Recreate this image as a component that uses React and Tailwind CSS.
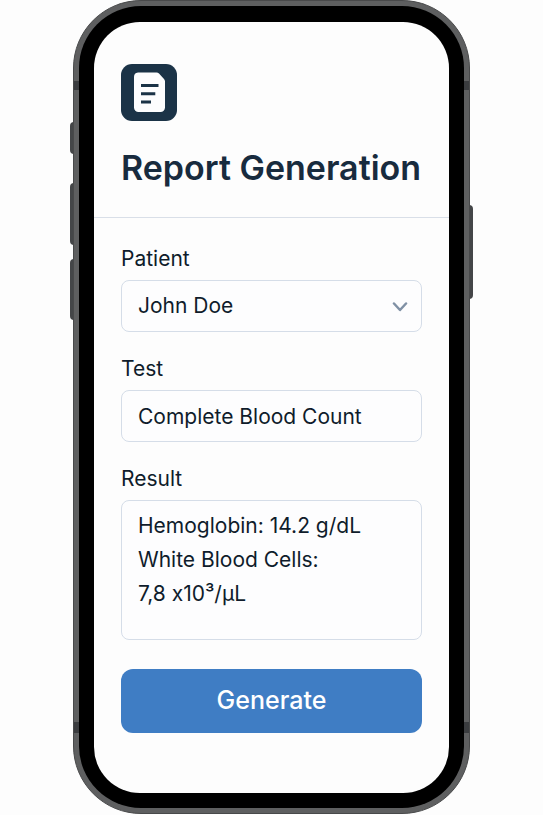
const fieldClass =
  "block w-full rounded-lg border border-[#d5dde8] bg-[#fdfdfe] px-4 font-normal text-[21px] text-[#0f1c2b] outline-none focus:border-[#3f7dc4]";

function ReportLogo() {
  return (
    <svg viewBox="0 0 56 57" className="block h-[57px] w-14" aria-hidden="true">
      <rect width="56" height="57" rx="11" fill="#1b3347" />
      <path
        d="M17 8.500h18.500q1.500 0 2.500 1l5 5.500q1 1 1 2.500V43.500a4.500 4.500 0 0 1-4.500 4.500H17.500a4.500 4.500 0 0 1-4.500-4.500V13a4.500 4.500 0 0 1 4-4.500z"
        fill="#fdfdfe"
      />
      <path d="M20 21.500h17.500M20 29.800h14.300M20 38h10" stroke="#1b3347" strokeWidth="3" />
    </svg>
  );
}

function Field({ id, label, children }) {
  return (
    <div className="flex flex-col gap-[7px]">
      <label htmlFor={id} className="text-[21px] leading-7 text-[#0f1c2b]">
        {label}
      </label>
      {children}
    </div>
  );
}

function PhoneFrame({ children }) {
  return (
    <div className="relative w-full max-w-[403px] px-[3px]">
      <span className="absolute top-[122px] left-0 h-8 w-1 rounded-l-sm bg-[#444648]" />
      <span className="absolute top-[183px] left-0 h-[62px] w-1 rounded-l-sm bg-[#444648]" />
      <span className="absolute top-[259px] left-0 h-[61px] w-1 rounded-l-sm bg-[#444648]" />
      <span className="absolute top-[205px] right-0 h-[94px] w-1 rounded-r-sm bg-[#444648]" />
      <div className="relative overflow-hidden rounded-[68px] border border-[#48494a] bg-[#5e5f60] p-[5px]">
        <span className="absolute inset-x-0 top-20 h-[9px] bg-[#3a3c3f]" />
        <span className="absolute inset-x-0 bottom-20 h-[11px] bg-[#3a3c3f]" />
        <div className="relative rounded-[62px] bg-black px-[15px] pt-4 pb-[15px]">
          <div className="overflow-hidden rounded-[46px] bg-[#fdfdfd]">{children}</div>
        </div>
      </div>
    </div>
  );
}

export default function App() {
  return (
    <div
      className="flex min-h-screen items-start justify-center bg-[#fdfdfd] font-['Inter',sans-serif] [font-feature-settings:'calt'_0]"
    >
      <PhoneFrame>
        <header className="border-b border-[#d9dfe8] px-[27px] pt-[42px] pb-[25px]">
          <ReportLogo />
          <h1 className="mt-[23px] text-[34px] leading-[48px] font-semibold whitespace-nowrap text-[#182b3e]">
            Report Generation
          </h1>
        </header>
        <form
          className="flex flex-col gap-[23px] px-[27px] pt-[27px] pb-[60px]"
          onSubmit={(event) => event.preventDefault()}
        >
          <Field id="patient" label="Patient">
            <div className="relative">
              <select id="patient" defaultValue="John Doe" className={`${fieldClass} h-[52px] appearance-none`}>
                <option>John Doe</option>
              </select>
              <svg
                viewBox="0 0 16 10"
                className="pointer-events-none absolute top-[22px] right-3.5 h-2.5 w-4"
                fill="none"
                stroke="#8091a5"
                strokeWidth="2.5"
                strokeLinecap="round"
                strokeLinejoin="round"
                aria-hidden="true"
              >
                <path d="M2 1.500 8 8l6-6.500" />
              </svg>
            </div>
          </Field>
          <Field id="test" label="Test">
            <input id="test" type="text" defaultValue="Complete Blood Count" className={`${fieldClass} h-[52px]`} />
          </Field>
          <Field id="result" label="Result">
            <textarea
              id="result"
              defaultValue={"Hemoglobin: 14.2 g/dL\nWhite Blood Cells:\n7,8 x10³/µL"}
              className={`${fieldClass} h-[140px] resize-none py-2 leading-[34px]`}
            />
          </Field>
          <button
            type="submit"
            className="mt-1.5 h-16 w-full rounded-xl bg-[#3f7dc4] text-[25px] font-medium text-white"
          >
            Generate
          </button>
        </form>
      </PhoneFrame>
    </div>
  );
}
